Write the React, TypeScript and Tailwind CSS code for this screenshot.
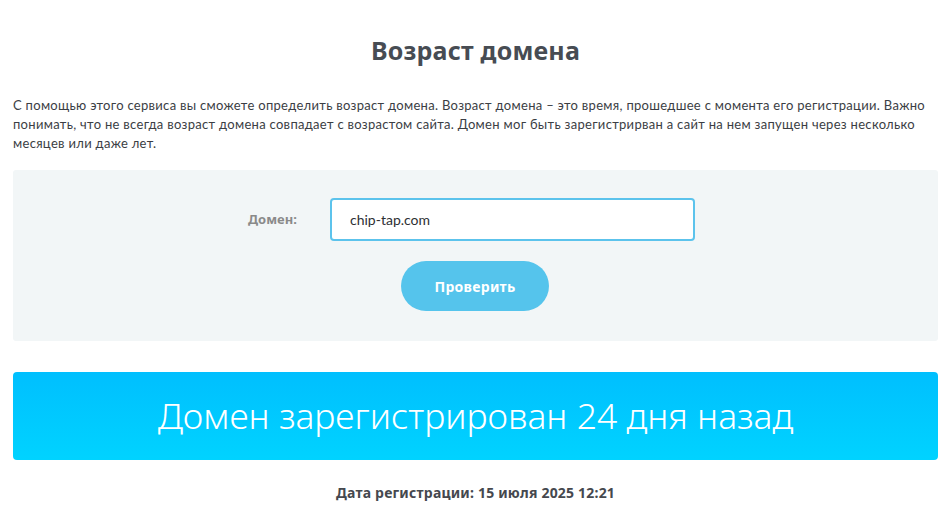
import React, { useState } from 'react';

export default function App() {
  const [domain, setDomain] = useState('chip-tap.com');

  return (
    <div className="min-h-screen bg-white px-[13px] font-['Open_Sans',sans-serif]">
      {/* Title */}
      <h1 className="pt-[34px] text-center text-[25px] leading-[32px] font-bold text-[#474c53] font-['Noto_Sans',sans-serif] tracking-[0.2px]">
        Возраст домена
      </h1>

      {/* Description */}
      <p className="mt-[30px] text-[13px] leading-[19px] tracking-[0.3px] text-[#3b3e44] font-['Lato',sans-serif]">
        С помощью этого сервиса вы сможете определить возраст домена. Возраст домена – это время, прошедшее с момента
        его регистрации. Важно понимать, что не всегда возраст домена совпадает с возрастом сайта. Домен мог быть
        зарегистрирван а сайт на нем запущен через несколько месяцев или даже лет.
      </p>

      {/* Form */}
      <div className="mt-[17px] h-[171px] rounded-[3px] bg-[#f2f6f7] pt-[28px]">
        <div className="flex items-center pl-[235px]">
          <label className="w-[82px] text-[13px] font-bold text-[#8a8a8a] font-['Noto_Sans',sans-serif]">
            Домен:
          </label>
          <input
            value={domain}
            onChange={(e) => setDomain(e.target.value)}
            className="h-[43px] w-[365px] rounded-[4px] border-2 border-[#5cc3ec] bg-white px-[18px] text-[14px] text-[#2d2f33] outline-none font-['Lato',sans-serif]"
          />
        </div>
        <div className="mt-[20px] flex justify-center">
          <button className="ml-[-1px] h-[50px] w-[148px] rounded-full bg-[#55c4ec] text-[14px] font-bold text-white font-['Noto_Sans',sans-serif] tracking-[0.3px]">
            Проверить
          </button>
        </div>
      </div>

      {/* Result */}
      <div className="mt-[31px] flex h-[88px] items-center justify-center rounded-[4px] bg-gradient-to-b from-[#00bffe] to-[#00d3ff]">
        <span className="text-[35.5px] font-light text-white font-['Noto_Sans',sans-serif]">
          Домен зарегистрирован 24 дня назад
        </span>
      </div>

      <p className="mt-[22px] text-center text-[14px] font-bold text-[#45484e] font-['Noto_Sans',sans-serif] tracking-[0.2px]">
        Дата регистрации: 15 июля 2025 12:21
      </p>
    </div>
  );
}
